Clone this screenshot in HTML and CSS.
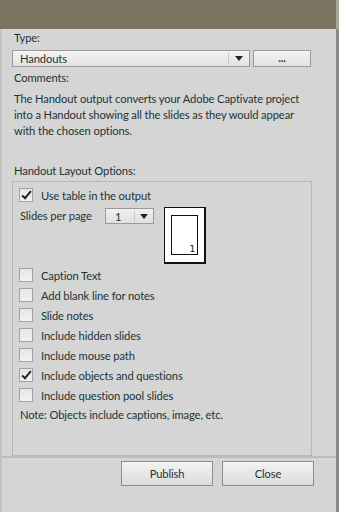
FILE: index.html
```html
<!DOCTYPE html>
<html>
<head>
<meta charset="utf-8">
<link rel="stylesheet" href="styles.css">
</head>
<body>
<div class="topband"></div>
<div class="window">
  <div class="panel">
    <div class="label l-type">Type:</div>
    <div class="typerow">
      <div class="select">
        <span class="select-text">Handouts</span>
        <span class="select-arrow"><span class="tri"></span></span>
      </div>
      <div class="btn-dots">...</div>
    </div>
    <div class="label l-comments">Comments:</div>
    <p class="desc">The Handout output converts your Adobe Captivate project into a Handout showing all the slides as they would appear with the chosen options.</p>
    <div class="label l-layout">Handout Layout Options:</div>
    <div class="group">
      <div class="check-row first"><span class="cb checked"></span><span>Use table in the output</span></div>
      <div class="spp">
        <span class="spp-label">Slides per page</span>
        <div class="mini-select"><span class="ms-val">1</span><span class="ms-arrow"><span class="tri"></span></span></div>
        <div class="preview"><div class="page"><span class="pnum">1</span></div></div>
      </div>
      <div class="check-list">
        <div class="check-row"><span class="cb"></span><span>Caption Text</span></div>
        <div class="check-row"><span class="cb"></span><span>Add blank line for notes</span></div>
        <div class="check-row"><span class="cb"></span><span>Slide notes</span></div>
        <div class="check-row"><span class="cb"></span><span>Include hidden slides</span></div>
        <div class="check-row"><span class="cb"></span><span>Include mouse path</span></div>
        <div class="check-row"><span class="cb checked"></span><span>Include objects and questions</span></div>
        <div class="check-row"><span class="cb"></span><span>Include question pool slides</span></div>
      </div>
      <div class="note">Note: Objects include captions, image, etc.</div>
    </div>
  </div>
  <div class="footer">
    <div class="btn">Publish</div>
    <div class="btn">Close</div>
  </div>
</div>
</body>
</html>
```
FILE: styles.css
```css
html, body {
  margin: 0;
  padding: 0;
  width: 339px;
  height: 512px;
  overflow: hidden;
  background: #d5d5d5;
}
body {
  font-family: "Lato", sans-serif;
  font-size: 11.2px;
  letter-spacing: -0.12px;
  color: #1d3434;
}
.topband {
  height: 29px;
  background: #7b725f;
  border-right: 3px solid #aaa69a;
  box-sizing: border-box;
}
.window {
  height: 483px;
  border-left: 2px solid #c3c3c3;
  border-right: 3px solid #8b8b8b;
  box-sizing: border-box;
  display: flex;
  flex-direction: column;
}
.panel {
  padding: 0 0 0 10px;
  height: 429px;
  box-sizing: border-box;
  border-bottom: 2px solid #bcbcbc;
}
.label {
  line-height: 16px;
  padding-left: 2px;
}
.l-type { margin-top: 1px; }
.typerow {
  display: flex;
  margin-top: 4px;
  height: 17px;
}
.select {
  width: 238px;
  box-sizing: border-box;
  border: 1px solid #9a9a9a;
  background: linear-gradient(#f4f4f4, #e2e2e2);
  display: flex;
  align-items: center;
  justify-content: space-between;
}
.select-text { padding-left: 7px; }
.select-arrow {
  width: 20px;
  height: 11px;
  border-left: 1px solid #c8c8c8;
  display: flex;
  align-items: center;
  justify-content: center;
}
.tri {
  width: 0; height: 0;
  border-left: 4px solid transparent;
  border-right: 4px solid transparent;
  border-top: 5px solid #222;
}
.btn-dots {
  width: 58px;
  margin-left: 3px;
  box-sizing: border-box;
  border: 1px solid #9a9a9a;
  background: linear-gradient(#f4f4f4, #e2e2e2);
  text-align: center;
  line-height: 13px;
  font-weight: bold;
}
.l-comments { margin-top: 3px; }
.desc {
  margin: 5px 0 0 2px;
  line-height: 16px;
  width: 300px;
}
.l-layout { margin-top: 24px; }
.group {
  margin-top: 2px;
  width: 300px;
  height: 275px;
  box-sizing: border-box;
  border: 1px solid #b8b8b8;
  padding: 3px 0 0 6px;
}
.check-row {
  display: flex;
  align-items: center;
  height: 20px;
  gap: 8px;
}
.cb {
  width: 12px;
  height: 12px;
  border: 1px solid #a2a2a2;
  background: linear-gradient(#e6e6e6, #f2f2f2);
  position: relative;
  flex: none;
}
.cb.checked::after {
  content: "";
  position: absolute;
  left: 4px;
  top: 0px;
  width: 3px;
  height: 8px;
  border: solid #222;
  border-width: 0 2px 2px 0;
  transform: rotate(40deg);
}
.spp {
  display: flex;
  align-items: flex-start;
  height: 57px;
  margin-top: 3px;
}
.spp-label {
  width: 85px;
  line-height: 16px;
  padding-left: 1px;
}
.mini-select {
  width: 49px;
  height: 16px;
  box-sizing: border-box;
  border: 1px solid #9a9a9a;
  background: linear-gradient(#f0f0f0, #e0e0e0);
  display: flex;
  align-items: center;
  justify-content: space-between;
}
.ms-val { padding-left: 9px; }
.ms-arrow {
  width: 18px;
  height: 11px;
  border-left: 1px solid #c8c8c8;
  display: flex;
  align-items: center;
  justify-content: center;
}
.preview {
  margin-left: 10px;
  width: 42px;
  height: 57px;
  box-sizing: border-box;
  border: 1px solid #111;
  border-right-width: 2px;
  border-bottom-width: 2px;
  background: #fff;
  padding: 7px 0 0 6px;
  margin-top: -1px;
  flex: none;
}
.page {
  width: 27px;
  height: 40px;
  box-sizing: border-box;
  border: 1px solid #111;
  position: relative;
}
.pnum {
  position: absolute;
  right: 2px;
  bottom: 0px;
  font-family: "DejaVu Sans", sans-serif;
  font-size: 9px;
  line-height: 10px;
  color: #111;
}
.note {
  padding-left: 1px;
  line-height: 20px;
}
.footer {
  display: flex;
  justify-content: flex-end;
  gap: 9px;
  padding: 3px 22px 0 0;
}
.btn {
  width: 92px;
  height: 25px;
  box-sizing: border-box;
  border: 1px solid #8e8e8e;
  background: linear-gradient(#f3f3f3, #dcdcdc);
  text-align: center;
  line-height: 23px;
}
```
